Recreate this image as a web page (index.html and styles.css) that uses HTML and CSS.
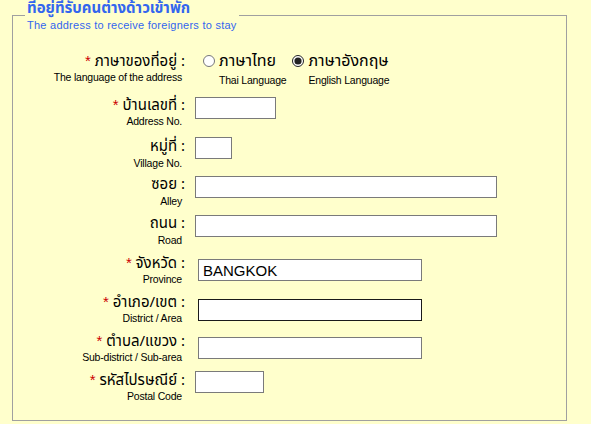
FILE: index.html
```html
<!DOCTYPE html>
<html>
<head>
<meta charset="utf-8">
<link rel="stylesheet" href="styles.css">
</head>
<body>
<fieldset class="box">
  <legend class="legend">
    <span class="legend-th">ที่อยู่ที่รับคนต่างด้าวเข้าพัก</span>
    <span class="legend-en">The address to receive foreigners to stay</span>
  </legend>
  <div class="rows">
    <div class="row r1">
      <div class="label"><div class="th"><span class="req">*</span> ภาษาของที่อยู่ :</div><div class="en">The language of the address</div></div>
      <div class="field radios">
        <label class="opt"><input type="radio" name="lang" class="radio"><span class="opt-text"><span class="th">ภาษาไทย</span><span class="en">Thai Language</span></span></label>
        <label class="opt"><input type="radio" name="lang" class="radio" checked><span class="opt-text"><span class="th">ภาษาอังกฤษ</span><span class="en">English Language</span></span></label>
      </div>
    </div>
    <div class="row r2">
      <div class="label"><div class="th"><span class="req">*</span> บ้านเลขที่ :</div><div class="en">Address No.</div></div>
      <div class="field"><input class="inp w81 off1" type="text"></div>
    </div>
    <div class="row r3">
      <div class="label"><div class="th">หมู่ที่ :</div><div class="en">Village No.</div></div>
      <div class="field"><input class="inp w37 offm1" type="text"></div>
    </div>
    <div class="row r4">
      <div class="label"><div class="th">ซอย :</div><div class="en">Alley</div></div>
      <div class="field"><input class="inp w302" type="text"></div>
    </div>
    <div class="row r5">
      <div class="label"><div class="th">ถนน :</div><div class="en">Road</div></div>
      <div class="field"><input class="inp w302" type="text"></div>
    </div>
    <div class="row r6">
      <div class="label"><div class="th"><span class="req">*</span> จังหวัด :</div><div class="en">Province</div></div>
      <div class="field shifted"><input class="inp w224 big" type="text" value="BANGKOK"></div>
    </div>
    <div class="row r7">
      <div class="label"><div class="th"><span class="req">*</span> อำเภอ/เขต :</div><div class="en">District / Area</div></div>
      <div class="field shifted s6"><input class="inp w224 dark" type="text"></div>
    </div>
    <div class="row r8">
      <div class="label"><div class="th"><span class="req">*</span> ตำบล/แขวง :</div><div class="en">Sub-district / Sub-area</div></div>
      <div class="field shifted"><input class="inp w224" type="text"></div>
    </div>
    <div class="row r9">
      <div class="label"><div class="th"><span class="req">*</span> รหัสไปรษณีย์ :</div><div class="en">Postal Code</div></div>
      <div class="field"><input class="inp w69" type="text"></div>
    </div>
  </div>
</fieldset>
</body>
</html>
```

FILE: styles.css
```css
html, body {
  margin: 0;
  padding: 0;
  background: #ffffcc;
}
body {
  font-family: Tahoma, "Noto Sans Thai", Loma, Garuda, "DejaVu Sans", "Liberation Sans", sans-serif;
  color: #000;
  overflow: hidden;
}
.box {
  margin: -1px 24px 0 12px;
  padding: 0 0 17px 0;
  border: 1px solid #a0a0a0;
}
.legend {
  margin-left: 12px;
  padding: 0 2px;
  display: flex;
  flex-direction: column;
}
.legend-th {
  color: #3366ee;
  font-size: 15px;
  font-weight: bold;
  line-height: 20px;
  height: 20px;
}
.legend-en {
  color: #3366ee;
  font-family: "Liberation Sans", Arial, sans-serif;
  font-size: 11px;
  letter-spacing: 0.25px;
  line-height: 12px;
}
.rows {
  display: flex;
  flex-direction: column;
  padding-top: 21px;
}
.row {
  display: flex;
  align-items: flex-start;
}
.r1 { height: 44px; }
.r2 { height: 42px; }
.r3 { height: 38px; }
.r4 { height: 39px; }
.r5 { height: 39px; }
.r6 { height: 39px; }
.r7 { height: 39px; }
.r8 { height: 39px; }
.label {
  width: 172px;
  text-align: right;
  flex: none;
}
.th {
  font-size: 15px;
  line-height: 18px;
  height: 18px;
  white-space: nowrap;
}
.en {
  font-family: "Liberation Sans", Arial, sans-serif;
  font-size: 10.5px;
  letter-spacing: -0.2px;
  line-height: 14px;
  height: 14px;
  white-space: nowrap;
}
.label .en {
  padding-right: 3px;
}
.req {
  color: #cc0000;
  font-family: "Liberation Sans", Arial, sans-serif;
  font-size: 15px;
}
.field {
  margin-left: 10px;
  display: flex;
}
.field.shifted {
  margin-left: 13px;
  margin-top: 5px;
}
.field.s6 {
  margin-top: 6px;
}
.inp {
  box-sizing: border-box;
  height: 22px;
  border: 1px solid #7a7a7a;
  background: #fff;
  margin: 0;
  padding: 0 4px;
  font-family: "Liberation Sans", Arial, sans-serif;
  font-size: 15px;
  color: #000;
  outline: none;
}
.inp.dark { border-color: #1a1a1a; }
.off1 { margin-top: 1px; }
.offm1 { margin-top: -1px; }
.w81 { width: 81px; }
.w37 { width: 37px; }
.w302 { width: 302px; }
.w224 { width: 224px; }
.w69 { width: 69px; }
.field.radios {
  gap: 6px;
  margin-left: 18px;
}
.opt {
  display: flex;
  align-items: flex-start;
}
.radio {
  width: 12px;
  height: 12px;
  margin: 3px 4px 0 0;
  accent-color: #222;
}
.opt-text {
  display: flex;
  flex-direction: column;
  text-align: left;
}
.opt-text .th { display: block; font-size: 16px; }
.opt-text .en { display: block; margin-top: 3px; }
```
